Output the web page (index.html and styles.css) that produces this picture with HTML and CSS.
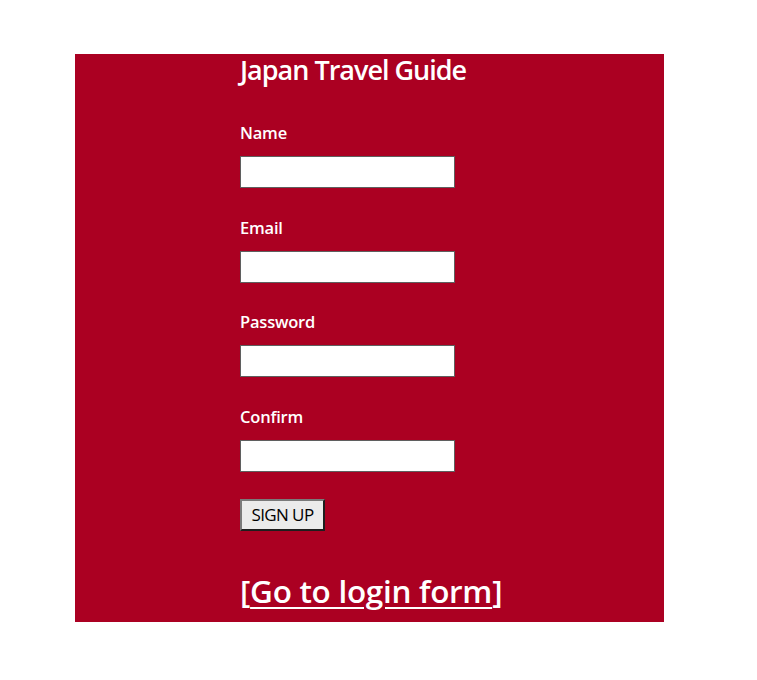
FILE: index.html
```html
<!DOCTYPE html>
<html lang="en">
<head>
<meta charset="utf-8">
<title>Japan Travel Guide - Sign up</title>
<link rel="stylesheet" href="styles.css">
</head>
<body>
<main class="panel">
  <h1 class="title">Japan Travel Guide</h1>
  <form class="signup">
    <div class="field">
      <label class="label" for="name">Name</label>
      <input class="input" id="name" type="text">
    </div>
    <div class="field">
      <label class="label" for="email">Email</label>
      <input class="input" id="email" type="email">
    </div>
    <div class="field">
      <label class="label" for="password">Password</label>
      <input class="input" id="password" type="password">
    </div>
    <div class="field">
      <label class="label" for="confirm">Confirm</label>
      <input class="input" id="confirm" type="password">
    </div>
    <button class="btn" type="button">SIGN UP</button>
  </form>
  <p class="switch"><a class="switch-link" href="#"><span class="bracket">[</span>Go to login form<span class="bracket">]</span></a></p>
</main>
</body>
</html>
```
FILE: styles.css
```css
html, body {
  margin: 0;
  padding: 0;
  background: #ffffff;
}
body {
  padding: 54px 0 0 75px;
  font-family: "Open Sans", "Noto Sans", sans-serif;
}
.panel {
  width: 589px;
  box-sizing: border-box;
  background: #ab0022;
  color: #ffffff;
  padding: 0 0 12px 165px;
}
.title {
  margin: 0;
  font-size: 27px;
  line-height: 32px;
  font-weight: 600;
  letter-spacing: -1px;
}
.signup {
  margin-top: 37px;
  display: flex;
  flex-direction: column;
  align-items: flex-start;
}
.field {
  display: flex;
  flex-direction: column;
  align-items: flex-start;
  margin-bottom: 29.6px;
}
.field:last-of-type {
  margin-bottom: 27px;
}
.label {
  font-size: 16.5px;
  line-height: 20px;
  font-weight: 600;
  letter-spacing: -0.2px;
  margin-bottom: 13px;
}
.input {
  width: 215px;
  height: 32px;
  box-sizing: border-box;
  margin: 0;
  border: 1px solid #5f5f5f;
  background: #ffffff;
  padding: 0 4px;
}
.btn {
  width: 85px;
  height: 32px;
  box-sizing: border-box;
  margin: 0;
  padding: 0;
  background: #ebebeb;
  border: 2px solid;
  border-color: #7a7a7a #1e1e1e #1e1e1e #7a7a7a;
  color: #000000;
  font-family: "Open Sans", "Noto Sans", sans-serif;
  font-size: 17px;
  font-weight: 400;
  line-height: 28px;
  letter-spacing: -0.6px;
}
.switch {
  margin: 41px 0 0;
  font-size: 31.5px;
  line-height: 38px;
  font-weight: 600;
  letter-spacing: -0.3px;
}
.switch-link {
  color: #ffffff;
  text-decoration: underline;
  text-decoration-thickness: 2px;
  text-underline-offset: 4px;
}
.bracket {
  display: inline-block;
}
```
